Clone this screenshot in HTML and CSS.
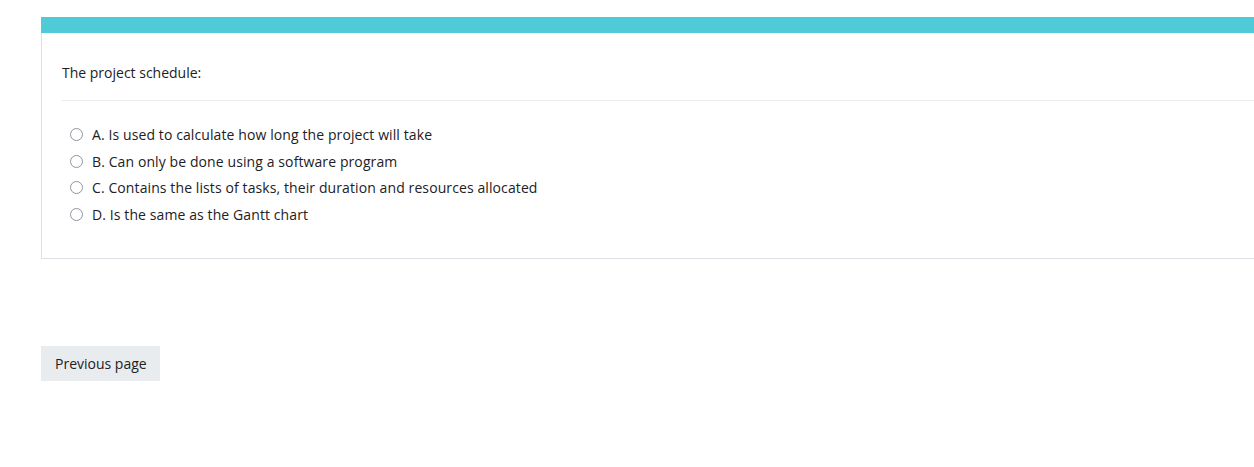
FILE: index.html
```html
<!DOCTYPE html>
<html>
<head>
<meta charset="utf-8">
<link rel="stylesheet" href="styles.css">
</head>
<body>
<div class="page">
  <div class="card">
    <div class="card-bar"></div>
    <div class="card-body">
      <div class="question">The project schedule:</div>
      <div class="answers">
        <label class="answer"><span class="radio"></span><span>A. Is used to calculate how long the project will take</span></label>
        <label class="answer"><span class="radio"></span><span>B. Can only be done using a software program</span></label>
        <label class="answer"><span class="radio"></span><span>C. Contains the lists of tasks, their duration and resources allocated</span></label>
        <label class="answer"><span class="radio"></span><span>D. Is the same as the Gantt chart</span></label>
      </div>
    </div>
  </div>
  <div class="nav">
    <button class="btn">Previous page</button>
  </div>
</div>
</body>
</html>
```

FILE: styles.css
```css
html, body {
  margin: 0;
  padding: 0;
  background: #fff;
  overflow: hidden;
}
body {
  font-family: "Open Sans", "Noto Sans", sans-serif;
  font-size: 14px;
  color: #1d2125;
}
.page {
  padding: 17px 0 0 41px;
}
.card {
  width: 1240px;
  border: 1px solid #dee2e6;
  border-top: none;
  background: #fff;
}
.card-bar {
  height: 16px;
  background: #4fcbd8;
  margin-left: -1px;
}
.card-body {
  padding: 30px 0 30px 20px;
}
.question {
  line-height: 20px;
  padding-bottom: 17px;
  border-bottom: 1px solid #e9ecef;
}
.answers {
  padding-top: 20px;
  display: flex;
  flex-direction: column;
}
.answer {
  display: flex;
  align-items: center;
  height: 26.7px;
  gap: 9px;
  padding-left: 8px;
  letter-spacing: 0.1px;
}
.radio {
  width: 11px;
  height: 11px;
  border: 1px solid #8f959e;
  border-radius: 50%;
  flex: none;
}
.nav {
  padding-top: 87px;
}
.btn {
  font-family: inherit;
  font-size: 14px;
  color: #1d2125;
  background: #e9ecef;
  border: none;
  height: 35px;
  padding: 0 13px 0 14px;
  border-radius: 0;
}
```
